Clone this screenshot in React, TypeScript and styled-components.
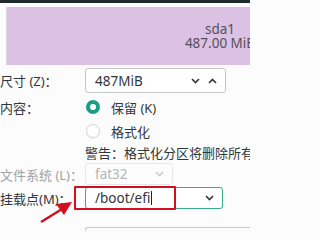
import styled, { createGlobalStyle } from "styled-components";

const GlobalStyle = createGlobalStyle`
  html, body {
    margin: 0;
    padding: 0;
    background: #fcfcfc;
    overflow: hidden;
  }
  body {
    font-family: "Noto Sans", "Noto Sans CJK SC", sans-serif;
    font-size: 13px;
    color: #31363b;
  }
`;

const Page = styled.div`
  position: relative;
  width: 250px;
  height: 231px;
  overflow: hidden;
`;

const TopBar = styled.div`
  height: 3px;
  background: #1f2a2a;
  margin-bottom: 4px;
`;

const PartitionBar = styled.div`
  display: flex;
  height: 58px;
`;

const FreeBlock = styled.div`
  width: 6px;
  background: #fdfdfd;
  border-right: 1px solid #d8d8d8;
`;

const PartBlock = styled.div`
  flex: 1;
  display: flex;
  align-items: center;
  background: #dcc1e4;
  overflow: hidden;
`;

const PartLabel = styled.div`
  margin-left: auto;
  margin-right: -14px;
  width: 88px;
  flex-shrink: 0;
  text-align: center;
  color: #55505a;
  font-size: 13.5px;
  line-height: 14px;
  white-space: nowrap;
`;

const Form = styled.div`
  display: flex;
  flex-direction: column;
  padding-top: 3px;
`;

const Row = styled.div<{ $h: number; $mt?: number }>`
  display: grid;
  grid-template-columns: 85px 1fr;
  align-items: center;
  height: ${(p) => p.$h}px;
  margin-top: ${(p) => p.$mt ?? 0}px;
`;

const Label = styled.div<{ $disabled?: boolean }>`
  white-space: nowrap;
  color: ${(p) => (p.$disabled ? "#a0a3a5" : "#31363b")};
`;

const Field = styled.div<{ $w: number; $border: string; $bg?: string }>`
  box-sizing: border-box;
  width: ${(p) => p.$w}px;
  height: 100%;
  display: flex;
  align-items: center;
  padding: 0 8px 0 9px;
  border: 1px solid ${(p) => p.$border};
  border-radius: 3px;
  background: ${(p) => p.$bg ?? "#fff"};
`;

const FieldText = styled.span<{ $muted?: boolean }>`
  flex: 1;
  font-size: 13.5px;
  color: ${(p) => (p.$muted ? "#b3b5b7" : "#31363b")};
  white-space: nowrap;
`;

const Caret = styled.span`
  display: inline-block;
  width: 1px;
  height: 14px;
  background: #232627;
  vertical-align: -2px;
  margin-left: 1px;
`;

const Chevrons = styled.div`
  display: flex;
  gap: 8px;
  align-items: center;
`;

const Radio = styled.span<{ $checked?: boolean }>`
  box-sizing: border-box;
  width: 14px;
  height: 14px;
  border-radius: 50%;
  flex-shrink: 0;
  background: #fff;
  border: ${(p) => (p.$checked ? "4px solid #1b9d84" : "1px solid #d4d6d8")};
  box-shadow: ${(p) => (p.$checked ? "none" : "0 1px 1px rgba(0,0,0,0.06)")};
`;

const Option = styled.div`
  display: flex;
  align-items: center;
  gap: 11px;
  padding-left: 1px;
  white-space: nowrap;
`;

const Warning = styled.div`
  white-space: nowrap;
`;

const NextField = styled.div`
  margin: 18px 0 0 85px;
  height: 4px;
  border-top: 1px solid #c8cacc;
  border-left: 1px solid #c8cacc;
  border-radius: 3px 0 0 0;
`;

const Highlight = styled.div`
  position: absolute;
  left: 74px;
  top: 186px;
  width: 102px;
  height: 24px;
  box-sizing: border-box;
  border: 2px solid #d0101c;
  border-radius: 1px;
`;

const Arrow = styled.svg`
  position: absolute;
  left: 38px;
  top: 198px;
`;

function Chevron({ up, color = "#31363b" }: { up?: boolean; color?: string }) {
  return (
    <svg width="9" height="6" viewBox="0 0 9 6">
      <path
        d={up ? "M1 5 L4.5 1.5 L8 5" : "M1 1 L4.5 4.5 L8 1"}
        fill="none"
        stroke={color}
        strokeWidth="1.6"
      />
    </svg>
  );
}

export default function App() {
  return (
    <Page>
      <GlobalStyle />
      <TopBar />
      <PartitionBar>
        <FreeBlock />
        <PartBlock>
          <PartLabel>
            sda1
            <br />
            487.00 MiB
          </PartLabel>
        </PartBlock>
      </PartitionBar>
      <Form>
        <Row $h={25}>
          <Label>尺寸 (Z)：</Label>
          <Field $w={141} $border="#c4c6c8">
            <FieldText>487MiB</FieldText>
            <Chevrons>
              <Chevron />
              <Chevron up />
            </Chevrons>
          </Field>
        </Row>
        <Row $h={24} $mt={2}>
          <Label>内容：</Label>
          <Option>
            <Radio $checked />
            保留 (K)
          </Option>
        </Row>
        <Row $h={24}>
          <Label />
          <Option>
            <Radio />
            格式化
          </Option>
        </Row>
        <Row $h={18}>
          <Label />
          <Warning>警告：格式化分区将删除所有数据。</Warning>
        </Row>
        <Row $h={22} $mt={2}>
          <Label $disabled>文件系统 (L)：</Label>
          <Field $w={88} $border="#e6e7e8" $bg="#fdfdfd">
            <FieldText $muted>fat32</FieldText>
            <Chevron color="#c8cacc" />
          </Field>
        </Row>
        <Row $h={22} $mt={2}>
          <Label>挂载点(M)：</Label>
          <Field $w={138} $border="#3aa98f">
            <FieldText>
              /boot/efi
              <Caret />
            </FieldText>
            <Chevron />
          </Field>
        </Row>
        <NextField />
      </Form>
      <Highlight />
      <Arrow width="40" height="30" viewBox="0 0 40 30">
        <line x1="3" y1="24" x2="24" y2="11" stroke="#d0101c" strokeWidth="2.4" />
        <polygon points="34,4 18,6 26,17" fill="#d0101c" />
      </Arrow>
    </Page>
  );
}
